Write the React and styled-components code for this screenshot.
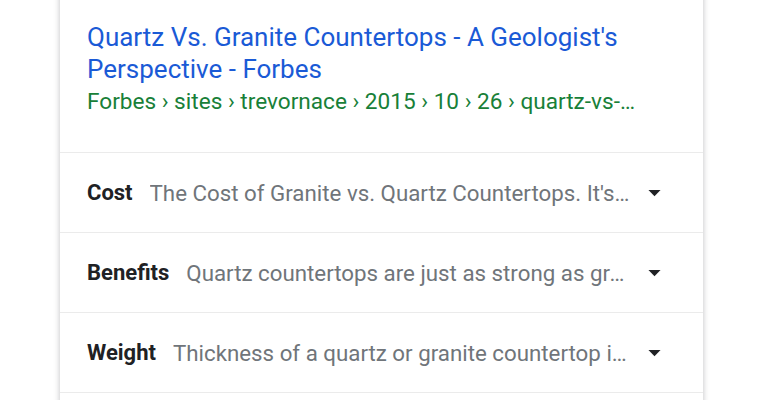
import React from 'react'
import styled, { createGlobalStyle } from 'styled-components'

const GlobalStyle = createGlobalStyle`
  body {
    margin: 0;
    background: #fff;
    font-family: Roboto, "Liberation Sans", Arial, sans-serif;
  }
`

const Page = styled.div`
  width: 760px;
  height: 400px;
  overflow: hidden;
  padding-left: 60px;
  box-sizing: border-box;
`

const Card = styled.div`
  width: 643px;
  background: #fff;
  box-shadow: 0 1px 6px rgba(32, 33, 36, 0.28);
  margin-top: -10px;
  padding-top: 10px;
`

const Head = styled.div`
  padding: 21px 28px 37px 27px;
  border-bottom: 1px solid #ebebeb;
`

const Title = styled.a`
  display: block;
  color: #1a5ad6;
  font-size: 26px;
  line-height: 32px;
  text-decoration: none;
`

const Crumbs = styled.div`
  color: #188038;
  font-size: 22.6px;
  line-height: 26px;
  margin-top: 4px;
  white-space: nowrap;
  overflow: hidden;
  text-overflow: ellipsis;
  padding-right: 38px;
`

const Row = styled.div`
  display: flex;
  align-items: center;
  height: 79px;
  padding: 0 34px 0 27px;
  border-bottom: 1px solid #ebebeb;
`

const Label = styled.span`
  flex: none;
  font-size: 22px;
  font-weight: 700;
  color: #202124;
  margin-right: 17px;
`

const Snippet = styled.span`
  flex: 1;
  min-width: 0;
  font-size: 22.3px;
  color: #70757a;
  white-space: nowrap;
  overflow: hidden;
  text-overflow: ellipsis;
`

const Arrow = styled.svg`
  flex: none;
  width: 29px;
  height: 29px;
  margin-left: 8px;
`

const rows = [
  { label: 'Cost', text: "The Cost of Granite vs. Quartz Countertops. It's not a cheap material" },
  { label: 'Benefits', text: 'Quartz countertops are just as strong as granite countertops' },
  { label: 'Weight', text: 'Thickness of a quartz or granite countertop is usually' },
  { label: 'Care', text: 'Quartz countertops need very little maintenance' },
]

const App = () => (
  <Page>
    <GlobalStyle />
    <Card>
      <Head>
        <Title href="#">Quartz Vs. Granite Countertops - A Geologist's Perspective - Forbes</Title>
        <Crumbs>Forbes › sites › trevornace › 2015 › 10 › 26 › quartz-vs-granite-countertops</Crumbs>
      </Head>
      {rows.map((r) => (
        <Row key={r.label}>
          <Label>{r.label}</Label>
          <Snippet>{r.text}</Snippet>
          <Arrow viewBox="0 0 24 24">
            <path d="M7 10l5 5 5-5z" fill="#202124" />
          </Arrow>
        </Row>
      ))}
    </Card>
  </Page>
)

export default App
